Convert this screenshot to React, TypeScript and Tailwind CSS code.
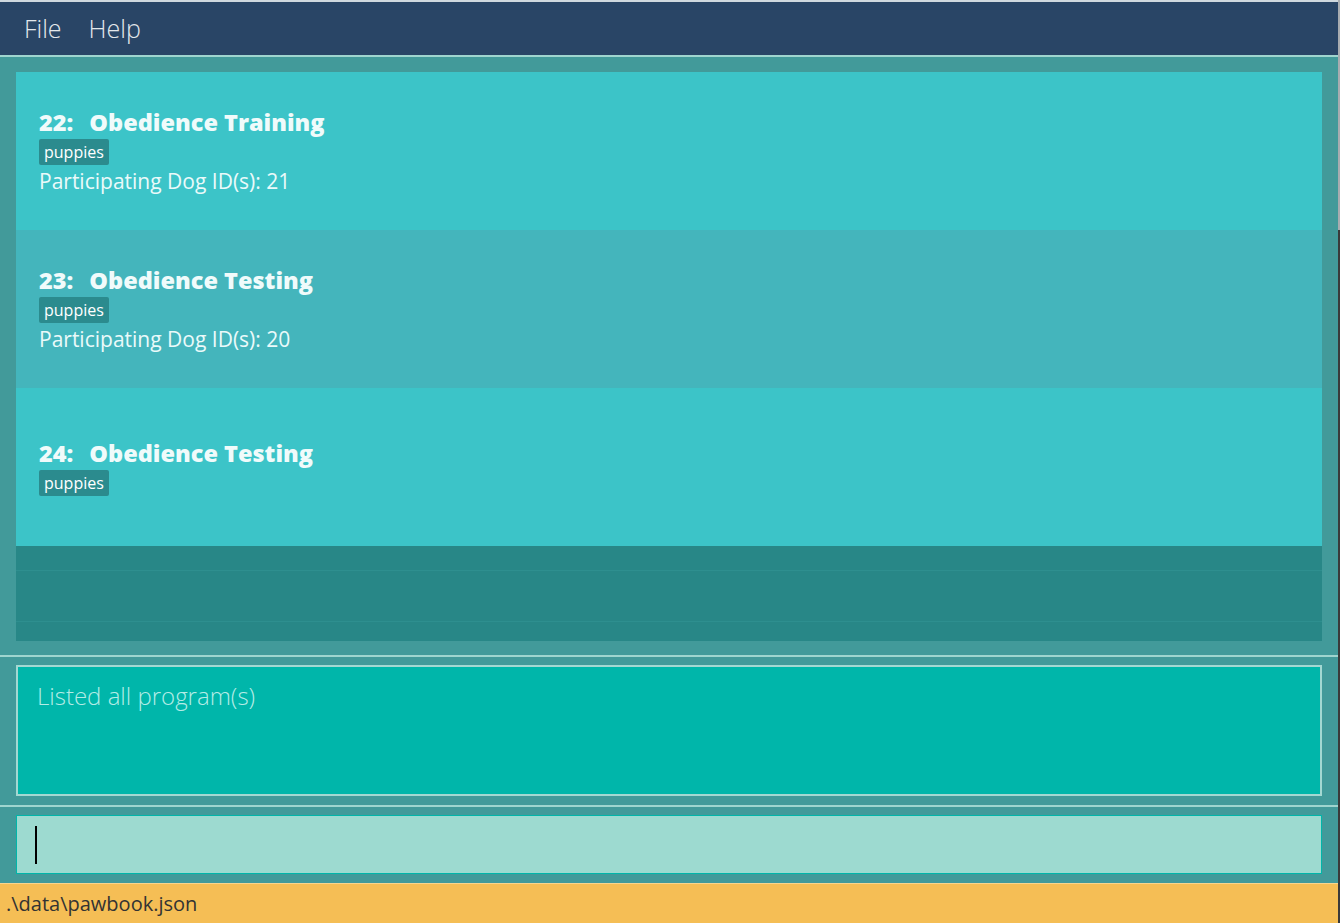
import React from "react";

const cards = [
  { id: 22, name: "Obedience Training", tag: "puppies", dogs: "21", bg: "bg-[#3cc4c8]" },
  { id: 23, name: "Obedience Testing", tag: "puppies", dogs: "20", bg: "bg-[#44b5bc]" },
  { id: 24, name: "Obedience Testing", tag: "puppies", dogs: null, bg: "bg-[#3cc4c8]" },
];

export default function App() {
  return (
    <div
      className="flex h-[923px] w-[1340px] overflow-hidden"
      style={{ fontFamily: '"Open Sans", "Noto Sans", sans-serif' }}
    >
      <div className="flex min-w-0 flex-1 flex-col">
        <div className="h-[2px] bg-[#cfd8de]" />
        <div className="flex h-[53px] items-center gap-[27px] bg-[#294566] pl-[24px] text-[25px] font-light text-[#e4e8ec]">
          <span>File</span>
          <span>Help</span>
        </div>
        <div className="h-[2px] bg-[#9fd5cf]" />
        <div className="bg-[#429a9a] px-[16px] pt-[15px] pb-[14px]">
          <div className="flex h-[569px] flex-col bg-[#288787]">
            {cards.map((c) => (
              <div key={c.id} className={`flex h-[158px] flex-col justify-center pl-[23px] ${c.bg}`}>
                <div className="flex gap-[16px] text-[23.5px] font-extrabold leading-[30px] text-[#f0fbfb]">
                  <span>{c.id}:</span>
                  <span>{c.name}</span>
                </div>
                <div className="mt-[2px] flex">
                  <span className="rounded-[2px] bg-[#2b8b8e] px-[5px] text-[16px] leading-[26px] text-white">
                    {c.tag}
                  </span>
                </div>
                {c.dogs && (
                  <div className="mt-[2px] text-[21px] leading-[28px] text-[#eafafa]">
                    Participating Dog ID(s): {c.dogs}
                  </div>
                )}
              </div>
            ))}
            <div className="h-[25px] border-b border-[#2e8f8f]" />
            <div className="h-[51px] border-b border-[#2e8f8f]" />
          </div>
        </div>
        <div className="h-[2px] bg-[#9fd5cf]" />
        <div className="bg-[#429a9a] px-[16px] pt-[8px] pb-[9px]">
          <div className="h-[131px] border-2 border-[#a3d8d2] bg-[#00b6aa] px-[19px] pt-[11px] text-[24px] font-light text-[#b4ece6]">
            Listed all program(s)
          </div>
        </div>
        <div className="h-[2px] bg-[#9fd5cf]" />
        <div className="bg-[#429a9a] px-[16px] pt-[8px] pb-[9px]">
          <div className="flex h-[59px] items-center border border-[#00b6aa] bg-[#9ddad0] pl-[18px]">
            <div className="h-[38px] w-[2px] bg-black" />
          </div>
        </div>
        <div className="flex flex-1 items-center border-t border-[#f8d58e] bg-[#f5be55] pl-[6px] text-[20px] text-[#333333]">
          .\data\pawbook.json
        </div>
      </div>
      <div className="flex w-[2px] flex-col">
        <div className="h-[230px] bg-[#a8acb0]" />
        <div className="flex-1 bg-[#3a3a3a]" />
      </div>
    </div>
  );
}
